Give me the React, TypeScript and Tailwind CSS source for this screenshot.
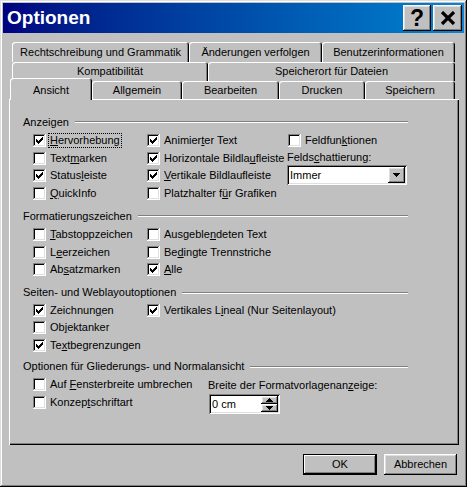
import React from "react";

const raised =
  "shadow-[inset_-1px_-1px_#000,inset_1px_1px_#fff,inset_-2px_-2px_#808080,inset_2px_2px_#dfdfdf]";
const sunken =
  "shadow-[inset_1px_1px_#808080,inset_-1px_-1px_#fff,inset_2px_2px_#000,inset_-2px_-2px_#dfdfdf]";

const checkPixels: [number, number, number][] = [
  [3, 9, 1],
  [4, 8, 2],
  [5, 3, 1],
  [5, 7, 3],
  [6, 3, 2],
  [6, 6, 3],
  [7, 3, 5],
  [8, 4, 3],
  [9, 5, 1],
];

function Box({ checked }: { checked?: boolean }) {
  return (
    <svg width="13" height="13" viewBox="0 0 13 13" shapeRendering="crispEdges" className="shrink-0">
      <rect x="0" y="0" width="13" height="13" fill="#fff" />
      <rect x="0" y="0" width="12" height="1" fill="#808080" />
      <rect x="0" y="0" width="1" height="12" fill="#808080" />
      <rect x="1" y="1" width="10" height="1" fill="#000" />
      <rect x="1" y="1" width="1" height="10" fill="#000" />
      <rect x="1" y="11" width="11" height="1" fill="#dfdfdf" />
      <rect x="11" y="1" width="1" height="11" fill="#dfdfdf" />
      {checked &&
        checkPixels.map(([y, x, w], i) => <rect key={i} x={x} y={y} width={w} height="1" fill="#000" />)}
    </svg>
  );
}

function Check({ checked, focus, children }: { checked?: boolean; focus?: boolean; children: React.ReactNode }) {
  return (
    <div className="flex h-[17.5px] items-center">
      <Box checked={checked} />
      <span
        className={
          "ml-[2px] border border-dotted px-px leading-[13px] " + (focus ? "border-black" : "border-transparent")
        }
      >
        {children}
      </span>
    </div>
  );
}

function Group({ title, h = "h-[18px]" }: { title: string; h?: string }) {
  return (
    <div className={"flex w-[385px] items-center " + h}>
      <span>{title}</span>
      <div className="ml-[6px] flex-1 border-t border-b border-t-[#808080] border-b-white" />
    </div>
  );
}

function Arrow({ up }: { up?: boolean }) {
  return (
    <svg width="7" height="4" viewBox="0 0 7 4" shapeRendering="crispEdges">
      {up ? <path d="M3 0h1v1h1v1h1v1h1v1H0V3h1V2h1V1h1z" fill="#000" /> : <path d="M0 0h7v1H6v1H5v1H4v1H3V3H2V2H1V1H0z" fill="#000" />}
    </svg>
  );
}

const tabBack =
  "flex items-center justify-center rounded-t-[3px] bg-[#c0c0c0] shadow-[inset_1px_1px_#fff,inset_-1px_0_#000,inset_-2px_0_#808080]";

export default function App() {
  return (
    <div className="h-[487px] w-[467px] bg-[#c0c0c0] p-[3px] font-['Liberation_Sans',Arial,sans-serif] text-[11px] text-black shadow-[inset_-1px_-1px_#000,inset_1px_1px_#dfdfdf,inset_-2px_-2px_#808080,inset_2px_2px_#fff]">
      {/* Title bar */}
      <div className="flex h-[30px] items-center bg-gradient-to-r from-[#000080] to-[#1084d0] pl-[4px] pr-[2px]">
        <span className="flex-1 text-[19px] font-bold text-white">Optionen</span>
        <div className={"flex h-[26px] w-[28px] items-center justify-center bg-[#c0c0c0] text-[23px] font-bold " + raised}>
          ?
        </div>
        <div className={"ml-[2px] flex h-[26px] w-[29px] items-center justify-center bg-[#c0c0c0] " + raised}>
          <svg width="16" height="14" viewBox="0 0 16 14">
            <path d="M2 1 L14 13 M14 1 L2 13" stroke="#000" strokeWidth="3.2" />
          </svg>
        </div>
      </div>

      {/* Tabs */}
      <div className="mt-[9px] ml-[9px] flex h-[20px]">
        <div className={tabBack + " w-[177px]"}>Rechtschreibung und Grammatik</div>
        <div className={tabBack + " w-[133px]"}>Änderungen verfolgen</div>
        <div className={tabBack + " w-[133px]"}>Benutzerinformationen</div>
      </div>
      <div className="ml-[9px] flex h-[19px]">
        <div className={tabBack + " w-[196px]"}>Kompatibilität</div>
        <div className={tabBack + " w-[247px]"}>Speicherort für Dateien</div>
      </div>
      <div className="ml-[7px] flex h-[18px] items-start">
        <div className="relative z-10 -mt-[3px] flex h-[22px] w-[82px] items-start justify-center rounded-t-[3px] bg-[#c0c0c0] pt-[4px] shadow-[inset_1px_1px_#fff,inset_-1px_0_#000,inset_-2px_0_#808080]">
          Ansicht
        </div>
        <div className={tabBack + " h-[18px] w-[90px]"}>Allgemein</div>
        <div className={tabBack + " h-[18px] w-[97px]"}>Bearbeiten</div>
        <div className={tabBack + " h-[18px] w-[86px]"}>Drucken</div>
        <div className={tabBack + " h-[18px] w-[90px]"}>Speichern</div>
      </div>

      {/* Panel */}
      <div className="ml-[6px] h-[346px] w-[450px] bg-[#c0c0c0] pt-[14px] pl-[14px] shadow-[inset_1px_1px_#fff,inset_-1px_-1px_#000,inset_-2px_-2px_#808080]">
        <Group title="Anzeigen" />
        <div className="ml-[10px] flex pt-px">
          <div className="w-[114px]">
            <Check checked focus>
              <u>H</u>ervorhebung
            </Check>
            <Check>
              Text<u>m</u>arken
            </Check>
            <Check checked>
              Status<u>l</u>eiste
            </Check>
            <Check>
              <u>Q</u>uickInfo
            </Check>
          </div>
          <div className="w-[141px]">
            <Check checked>
              Animier<u>t</u>er Text
            </Check>
            <Check checked>
              Horizontale Bildla<u>u</u>fleiste
            </Check>
            <Check checked>
              <u>V</u>ertikale Bildlaufleiste
            </Check>
            <Check>
              Platzhalter f<u>ü</u>r Grafiken
            </Check>
          </div>
          <div className="flex w-[121px] flex-col">
            <Check>
              Feldfun<u>k</u>tionen
            </Check>
            <div className="-ml-px flex h-[15.5px] items-center pb-[1px]">
              Felds<u>c</u>hattierung:
            </div>
            <div className={"-ml-px flex h-[20px] w-[120px] items-center bg-white pl-[3px] pr-[2px] " + sunken}>
              <span className="flex-1">Immer</span>
              <div className={"flex h-[16px] w-[17px] items-center justify-center bg-[#c0c0c0] " + raised}>
                <Arrow />
              </div>
            </div>
          </div>
        </div>

        <div className="mt-[5px]">
          <Group title="Formatierungszeichen" />
        </div>
        <div className="ml-[10px] flex pt-px">
          <div className="w-[114px]">
            <Check>
              <u>T</u>abstoppzeichen
            </Check>
            <Check>
              L<u>e</u>erzeichen
            </Check>
            <Check>
              Ab<u>s</u>atzmarken
            </Check>
          </div>
          <div>
            <Check>
              Ausgeble<u>n</u>deten Text
            </Check>
            <Check>
              Be<u>d</u>ingte Trennstriche
            </Check>
            <Check checked>
              <u>A</u>lle
            </Check>
          </div>
        </div>

        <div className="mt-[5px]">
          <Group title="Seiten- und Weblayoutoptionen" />
        </div>
        <div className="ml-[10px] flex">
          <div className="w-[114px]">
            <Check checked>
              Zeichnun<u>g</u>en
            </Check>
            <Check>
              Ob<u>j</u>ektanker
            </Check>
            <Check checked>
              Te<u>x</u>tbegrenzungen
            </Check>
          </div>
          <div>
            <Check checked>
              Vertikales L<u>i</u>neal (Nur Seitenlayout)
            </Check>
          </div>
        </div>

        <div className="mt-[4px]">
          <Group title="Optionen für Gliederungs- und Normalansicht" h="h-[17px]" />
        </div>
        <div className="ml-[10px] flex pt-px">
          <div className="w-[175px]">
            <Check>
              Auf <u>F</u>ensterbreite umbrechen
            </Check>
            <Check>
              Konzep<u>t</u>schriftart
            </Check>
          </div>
          <div className="flex flex-col">
            <div className="flex h-[17px] items-center pt-[2px]">
              Breite der Formatvorlagenan<u>z</u>eige:
            </div>
            <div className={"mt-px ml-px flex h-[20px] w-[71px] items-center bg-white pl-[3px] pr-[2px] " + sunken}>
              <span className="flex-1">0 cm</span>
              <div className="flex w-[17px] flex-col">
                <div className={"flex h-[8px] items-center justify-center bg-[#c0c0c0] " + raised}>
                  <Arrow up />
                </div>
                <div className={"flex h-[8px] items-center justify-center bg-[#c0c0c0] " + raised}>
                  <Arrow />
                </div>
              </div>
            </div>
          </div>
        </div>
      </div>

      {/* Buttons */}
      <div className="mt-[9px] flex justify-end gap-[7px] pr-[7px]">
        <div className="flex h-[21px] w-[74px] items-center justify-center border border-black bg-[#c0c0c0] shadow-[inset_-1px_-1px_#000,inset_1px_1px_#fff,inset_-2px_-2px_#808080]">
          OK
        </div>
        <div className={"flex h-[21px] w-[73px] items-center justify-center bg-[#c0c0c0] " + raised}>Abbrechen</div>
      </div>
    </div>
  );
}
